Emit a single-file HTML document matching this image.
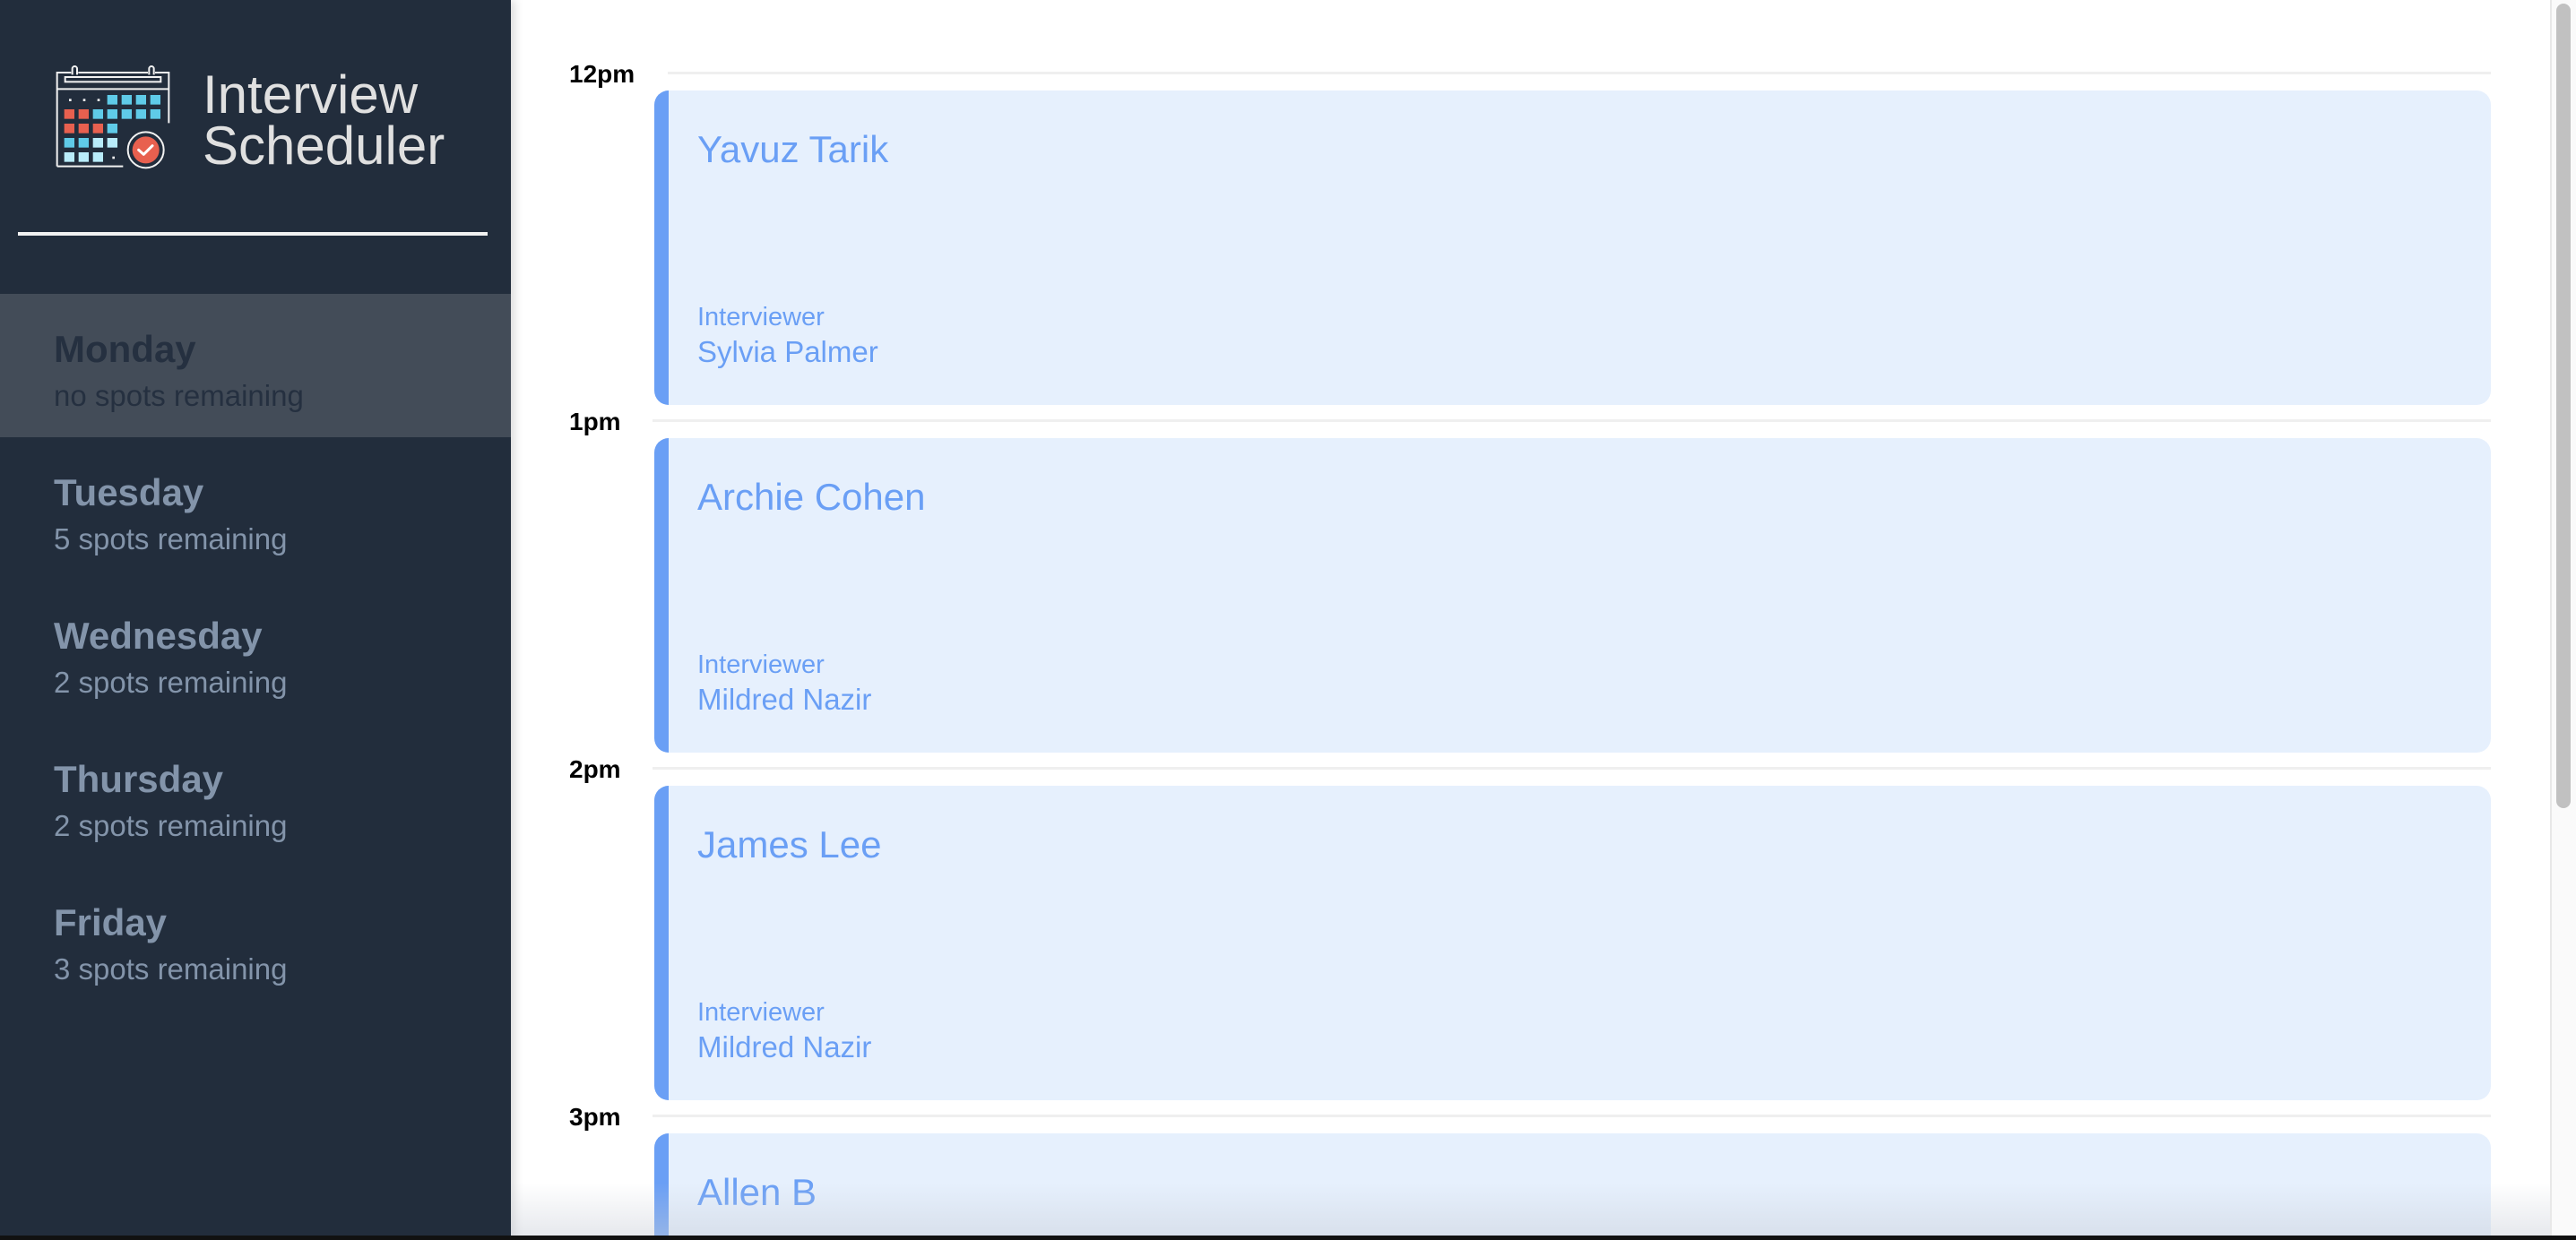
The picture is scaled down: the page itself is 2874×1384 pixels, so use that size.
<!DOCTYPE html>
<html><head><meta charset="utf-8"><style>
*{margin:0;padding:0;box-sizing:border-box}
html,body{width:2874px;height:1384px;overflow:hidden;background:#fff;font-family:"Liberation Sans",sans-serif}
body{position:relative}
.abs{position:absolute}
#side{left:0;top:0;width:570px;height:1384px;background:#222d3c;box-shadow:4px 0 10px rgba(0,0,0,0.15)}
.title{left:226px;color:#e0e0e0;font-size:60px;line-height:60px;white-space:nowrap}
.day{left:0;width:570px;height:160px}
.dn{position:absolute;left:60px;font-size:42px;font-weight:bold;color:#8394aa;white-space:nowrap}
.ds{position:absolute;left:60px;font-size:33px;color:#8394aa;white-space:nowrap}
.lab{font-weight:bold;font-size:28px;color:#000;white-space:nowrap}
.ln{height:3px;background:#efefef}
.card{left:730px;width:2049px;height:351px;background:#e6f0fd;border-left:16px solid #6a9ff5;border-radius:16px;overflow:hidden}
.nm{position:absolute;left:32px;font-size:42px;color:#6a9ff5;white-space:nowrap}
.iv{position:absolute;left:32px;font-size:29px;color:#6a9ff5;white-space:nowrap}
.ivn{position:absolute;left:32px;font-size:33px;color:#6a9ff5;white-space:nowrap}
</style></head><body>
<div id="side" class="abs">
<svg class="abs" style="left:50px;top:60px" width="160" height="145" viewBox="0 0 480 435">
<g fill="none" stroke="#f2f2f2" stroke-width="6">
<path d="M41 377V63H88M112 63H345M369 63H415V232"/>
<path d="M41 377H262"/>
<line x1="41" y1="118" x2="415" y2="118"/>
<rect x="68" y="78" width="320" height="16"/>
<path d="M92 70V50a8 8 0 0 1 16 0V70"/>
<path d="M349 70V50a8 8 0 0 1 16 0V70"/>
<circle cx="338" cy="322" r="60"/>
</g>
<g fill="#f2f2f2"><rect x="81" y="151" width="8" height="8"/><rect x="128" y="151" width="8" height="8"/><rect x="176" y="151" width="8" height="8"/><rect x="226" y="344" width="8" height="8"/></g>
<g fill="#5fcbe8">
<rect x="209" y="138" width="34" height="32"/><rect x="257" y="138" width="34" height="32"/><rect x="305" y="138" width="34" height="32"/><rect x="353" y="138" width="34" height="32"/>
<rect x="161" y="186" width="34" height="32"/><rect x="209" y="186" width="34" height="32"/><rect x="257" y="186" width="34" height="32"/><rect x="305" y="186" width="34" height="32"/><rect x="353" y="186" width="34" height="32"/>
<rect x="209" y="234" width="34" height="32"/>
<rect x="65" y="282" width="34" height="32"/><rect x="113" y="282" width="34" height="32"/>
</g>
<g fill="#e8604f">
<rect x="65" y="186" width="34" height="32"/><rect x="113" y="186" width="34" height="32"/>
<rect x="65" y="234" width="34" height="32"/><rect x="113" y="234" width="34" height="32"/><rect x="161" y="234" width="34" height="32"/>
</g>
<g fill="#b9ecfa">
<rect x="161" y="282" width="34" height="32"/><rect x="209" y="282" width="34" height="32"/>
<rect x="65" y="330" width="34" height="32"/><rect x="113" y="330" width="34" height="32"/><rect x="161" y="330" width="34" height="32"/>
</g>
<circle cx="338" cy="322" r="45" fill="#e8604f"/>
<path d="M314 322L331 337L360 308" fill="none" stroke="#fff" stroke-width="9" stroke-linecap="round" stroke-linejoin="round"/>
</svg>
<div class="abs title" style="top:76px">Interview</div>
<div class="abs title" style="top:133px">Scheduler</div>
<div class="abs" style="left:20px;top:259px;width:524px;height:4px;background:#f2f2f2"></div>

<div class="abs day" style="top:328px;background:#434c58"><div class="dn" style="top:38px;color:#253040">Monday</div><div class="ds" style="top:95px;color:#253040">no spots remaining</div></div>
<div class="abs day" style="top:488px"><div class="dn" style="top:38px">Tuesday</div><div class="ds" style="top:95px">5 spots remaining</div></div>
<div class="abs day" style="top:648px"><div class="dn" style="top:38px">Wednesday</div><div class="ds" style="top:95px">2 spots remaining</div></div>
<div class="abs day" style="top:808px"><div class="dn" style="top:38px">Thursday</div><div class="ds" style="top:95px">2 spots remaining</div></div>
<div class="abs day" style="top:968px"><div class="dn" style="top:38px">Friday</div><div class="ds" style="top:95px">3 spots remaining</div></div>
</div>

<div class="abs lab" style="left:635px;top:67px">12pm</div>
<div class="abs ln" style="left:745px;top:80px;width:2034px"></div>
<div class="abs card" style="top:101px"><div class="nm" style="top:42px">Yavuz Tarik</div><div class="iv" style="top:237px">Interviewer</div><div class="ivn" style="top:273px">Sylvia Palmer</div></div>

<div class="abs lab" style="left:635px;top:455px">1pm</div>
<div class="abs ln" style="left:728px;top:468px;width:2051px"></div>
<div class="abs card" style="top:489px"><div class="nm" style="top:42px">Archie Cohen</div><div class="iv" style="top:237px">Interviewer</div><div class="ivn" style="top:273px">Mildred Nazir</div></div>

<div class="abs lab" style="left:635px;top:843px">2pm</div>
<div class="abs ln" style="left:728px;top:856px;width:2051px"></div>
<div class="abs card" style="top:877px"><div class="nm" style="top:42px">James Lee</div><div class="iv" style="top:237px">Interviewer</div><div class="ivn" style="top:273px">Mildred Nazir</div></div>

<div class="abs lab" style="left:635px;top:1231px">3pm</div>
<div class="abs ln" style="left:728px;top:1244px;width:2051px"></div>
<div class="abs card" style="top:1265px;height:114px;border-radius:16px 16px 0 0"><div class="nm" style="top:42px">Allen B</div></div>

<div class="abs" style="left:570px;top:1320px;width:2275px;height:59px;background:linear-gradient(rgba(200,205,215,0),rgba(200,205,215,0.45))"></div>
<div class="abs" style="left:2845px;top:0;width:29px;height:1379px;background:#fafafa;border-left:2px solid #e8e8e8"></div>
<div class="abs" style="left:2852px;top:4px;width:16px;height:898px;background:#c1c1c1;border-radius:8px"></div>
<div class="abs" style="left:0;top:1379px;width:2874px;height:5px;background:#111"></div>
</body></html>
